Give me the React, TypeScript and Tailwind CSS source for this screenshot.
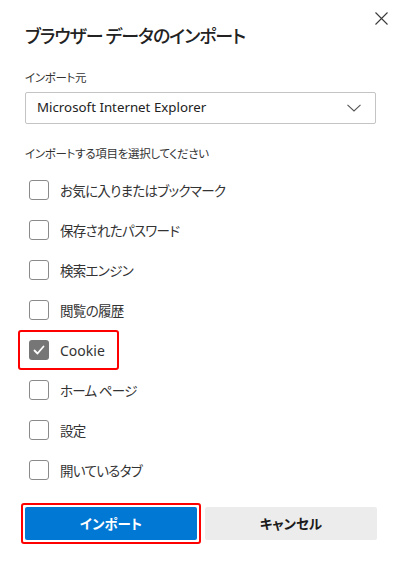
import React from 'react';

const items = [
    { label: 'お気に入りまたはブックマーク', checked: false },
    { label: '保存されたパスワード', checked: false },
    { label: '検索エンジン', checked: false },
    { label: '閲覧の履歴', checked: false },
    { label: 'Cookie', checked: true, marked: true },
    { label: 'ホーム ページ', checked: false },
    { label: '設定', checked: false },
    { label: '開いているタブ', checked: false },
];

function Checkbox({ checked }: { checked: boolean }) {
    if (checked) {
        return (
            <span className="w-5 h-5 rounded-[3px] bg-[#767676] flex items-center justify-center shrink-0">
                <svg width="14" height="14" viewBox="0 0 14 14" fill="none">
                    <path d="M2.5 7.5 L5.5 10.5 L11.5 3.5" stroke="white" strokeWidth="1.8" strokeLinecap="round" strokeLinejoin="round" />
                </svg>
            </span>
        );
    }
    return <span className="w-5 h-5 rounded-[3px] border border-[#8a8a8a] bg-white shrink-0" />;
}

export default function App() {
    return (
        <div className="relative w-[402px] h-[566px] bg-white px-[25px] text-[#1b1b1b] font-['Noto_Sans_CJK_JP','Noto_Sans',sans-serif] [font-feature-settings:'palt']">
            {/* close */}
            <button className="absolute top-[12px] left-[375px] w-[13px] h-[13px]">
                <svg width="13" height="13" viewBox="0 0 13 13" fill="none">
                    <path d="M0.5 0.5 L12.5 12.5 M12.5 0.5 L0.5 12.5" stroke="#3a3a3a" strokeWidth="1.1" />
                </svg>
            </button>

            <h1 className="pt-[21px] text-[18px] leading-[28px] font-medium tracking-[-1px] text-[#222]">ブラウザー データのインポート</h1>

            <div className="mt-[20px] text-[11.5px] leading-[16px] tracking-[-0.3px] text-[#333]">インポート元</div>

            <div className="mt-[7px] h-[32px] w-[351px] border border-[#c4c4c4] rounded-[2px] flex items-center justify-between pl-[11px] pr-[14px]">
                <span className="text-[13.3px] font-['Noto_Sans',sans-serif] text-[#222]">Microsoft Internet Explorer</span>
                <svg width="14" height="8" viewBox="0 0 14 8" fill="none">
                    <path d="M0.5 0.8 L7 7 L13.5 0.8" stroke="#555" strokeWidth="1.1" />
                </svg>
            </div>

            <div className="mt-[21px] text-[11.5px] leading-[16px] tracking-[-0.3px] text-[#333]">インポートする項目を選択してください</div>

            <div className="mt-[9px] flex flex-col -ml-[7px]">
                {items.map((it) => (
                    <div key={it.label} className="h-10 flex">
                        <div className={`h-10 flex items-center gap-[11px] pl-[9px] pr-[12px] rounded-[3px] border-2 ${it.marked ? 'border-[#ff0000]' : 'border-transparent'}`}>
                            <Checkbox checked={it.checked} />
                            {it.marked
                                ? <span className="text-[14px] text-[#333] font-['Noto_Sans',sans-serif]">{it.label}</span>
                                : <span className="text-[13.5px] tracking-[-0.7px] text-[#333]">{it.label}</span>}
                        </div>
                    </div>
                ))}
            </div>

            <div className="mt-[13px] flex items-center -ml-1">
                <div className="border-2 border-[#ff0000] rounded-[3px] p-[2px]">
                    <button className="w-[172px] h-[33px] bg-[#0078d4] rounded-[2px] text-white text-[13.5px] font-bold">インポート</button>
                </div>
                <button className="ml-1 w-[172px] h-[33px] bg-[#ececec] rounded-[2px] text-[#1b1b1b] text-[13.5px] font-bold">キャンセル</button>
            </div>
        </div>
    );
}
